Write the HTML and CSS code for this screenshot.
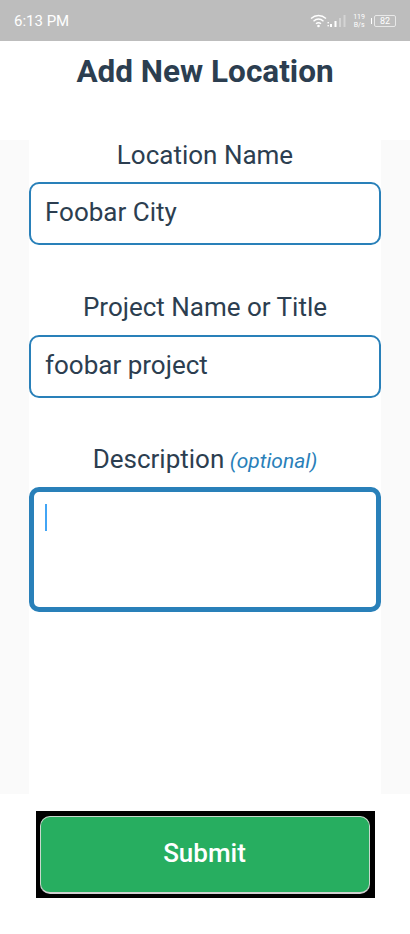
FILE: index.html
```html
<!DOCTYPE html>
<html>
<head>
  <title>Add New Location</title>
  <link rel="stylesheet" href="styles.css">
</head>
<body>
  <div class="status-bar">
    <span class="clock">6:13 PM</span>
    <div class="status-icons">
      <svg class="wifi" width="20" height="14" viewBox="0 0 20 14">
        <path d="M1 4.5C5.5.5 11.5.5 16 4.5" fill="none" stroke="#fff" stroke-width="1.4"/>
        <path d="M3.5 7.2C6.5 4.6 10.5 4.6 13.5 7.2" fill="none" stroke="#fff" stroke-width="1.4"/>
        <path d="M6 9.8C7.6 8.5 9.4 8.5 11 9.8" fill="none" stroke="#fff" stroke-width="1.4"/>
        <circle cx="8.5" cy="12" r="1.3" fill="#fff"/>
        <rect x="17.5" y="8" width="1.4" height="1.4" fill="#fff"/>
        <rect x="17.5" y="11" width="1.4" height="1.4" fill="#fff"/>
      </svg>
      <svg class="signal" width="16" height="14" viewBox="0 0 16 14">
        <rect x="0" y="10" width="2" height="3" fill="#fff"/>
        <rect x="4.5" y="7" width="2" height="6" fill="#fff"/>
        <rect x="9" y="4" width="2" height="9" fill="#d4d4d4"/>
        <rect x="13.5" y="1" width="2" height="12" fill="#d4d4d4"/>
      </svg>
      <div class="net-speed"><span>119</span><span>B/s</span></div>
      <div class="battery-cap"></div>
      <div class="battery">82</div>
    </div>
  </div>

  <header class="title-bar">
    <h1>Add New Location</h1>
  </header>

  <main class="form-band">
    <form class="form-col">
      <label class="field-label" for="location">Location Name</label>
      <input class="text-field" type="text" id="location" value="Foobar City">

      <label class="field-label second" for="project">Project Name or Title</label>
      <input class="text-field" type="text" id="project" value="foobar project">

      <div class="field-label third">Description <em class="optional">(optional)</em></div>
      <div class="text-area"><span class="caret"></span></div>
    </form>
  </main>

  <footer class="actions">
    <div class="submit-wrap">
      <button class="submit-btn" type="button">Submit</button>
    </div>
  </footer>
</body>
</html>
```

FILE: styles.css
```css
body {
  font-family: Roboto, sans-serif;
  margin: 0;
  padding: 0;
  background-color: #FFFFFF;
  color: #2c3e50;
}

.status-bar {
  height: 41px;
  background-color: #bdbdbd;
  color: #FFFFFF;
  display: flex;
  align-items: center;
  justify-content: space-between;
  padding: 0 14px;
}

.clock {
  font-size: 15px;
}

.status-icons {
  display: flex;
  align-items: center;
}

.wifi {
  margin-right: 0;
}

.signal {
  margin-right: 7px;
}

.net-speed {
  display: flex;
  flex-direction: column;
  align-items: center;
  font-size: 7px;
  line-height: 8px;
  margin-right: 6px;
}

.battery-cap {
  width: 1px;
  height: 6px;
  background-color: #FFFFFF;
  margin-right: 2px;
}

.battery {
  width: 20px;
  height: 10px;
  border: 1px solid #e8e8e8;
  border-radius: 2px;
  font-size: 9px;
  line-height: 10px;
  text-align: center;
}

.title-bar {
  height: 99px;
  box-sizing: border-box;
  padding-top: 11px;
}

h1 {
  margin: 0;
  font-size: 31.5px;
  line-height: 40px;
  font-weight: 700;
  text-align: center;
}

.form-band {
  height: 654px;
  background-color: #fafafa;
  padding: 0 29px;
}

.form-col {
  height: 100%;
  background-color: #FFFFFF;
  display: flex;
  flex-direction: column;
}

.field-label {
  display: block;
  font-size: 26px;
  line-height: 30px;
  text-align: center;
  margin-bottom: 12px;
}

.second {
  margin-top: 47px;
  margin-bottom: 13px;
}

.third {
  margin-top: 46px;
  margin-bottom: 11px;
}

.optional {
  font-size: 21px;
  color: #2980b9;
  margin-left: -1px;
}

.text-field {
  width: 100%;
  height: 63px;
  box-sizing: border-box;
  font-family: Roboto, sans-serif;
  font-size: 26px;
  color: #2c3e50;
  padding: 0 14px 4px;
  border: 2px solid #2980b9;
  border-radius: 10px;
  outline: none;
}

.text-area {
  height: 125px;
  box-sizing: border-box;
  padding: 12px 11px;
  border: 5px solid #2980b9;
  border-radius: 10px;
}

.caret {
  display: block;
  width: 2px;
  height: 27px;
  background-color: #42a5f5;
}

.actions {
  height: 140px;
  padding-top: 17px;
  box-sizing: border-box;
  display: flex;
  justify-content: center;
}

.submit-wrap {
  width: 339px;
  height: 87px;
  box-sizing: border-box;
  background-color: #000000;
  padding: 5px 5px 4px 4px;
}

.submit-btn {
  width: 100%;
  height: 78px;
  padding-bottom: 5px;
  background-color: #27ae60;
  color: #FFFFFF;
  font-family: Roboto, sans-serif;
  font-size: 26px;
  font-weight: 500;
  border: 1px solid #c8d8cc;
  border-bottom: 2px solid #d0d0d0;
  border-radius: 10px;
  cursor: pointer;
}
```
